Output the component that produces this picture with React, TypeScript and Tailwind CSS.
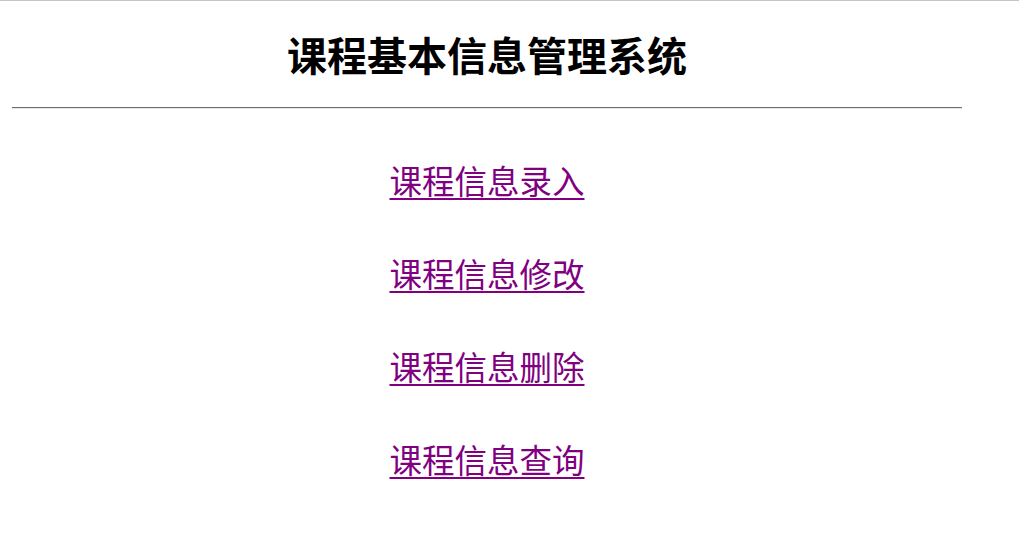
const LINKS = ['课程信息录入', '课程信息修改', '课程信息删除', '课程信息查询'];

export default function App() {
  return (
    <div
      className="min-h-screen bg-white border-t border-[#c4c4c4]"
      style={{ fontFamily: '"Noto Sans CJK SC", "Noto Sans", sans-serif' }}
    >
      <div className="ml-[12px] w-[950px]">
        {/* Title */}
        <h1 className="pt-[29px] text-center text-[40px] font-bold leading-[48px] text-black">
          课程基本信息管理系统
        </h1>

        <div className="mt-[29px] h-0 border-t border-b border-t-[#6e6e6e] border-b-[#e6e6e6]" />

        {/* Menu */}
        <div className="mt-[48px] flex flex-col items-center gap-[47px]">
          {LINKS.map((label) => (
            <a
              key={label}
              href="#"
              className="text-[32.5px] leading-[46px] text-[#800080] underline decoration-[2px] underline-offset-[4px]"
            >
              {label}
            </a>
          ))}
        </div>
      </div>
    </div>
  );
}
